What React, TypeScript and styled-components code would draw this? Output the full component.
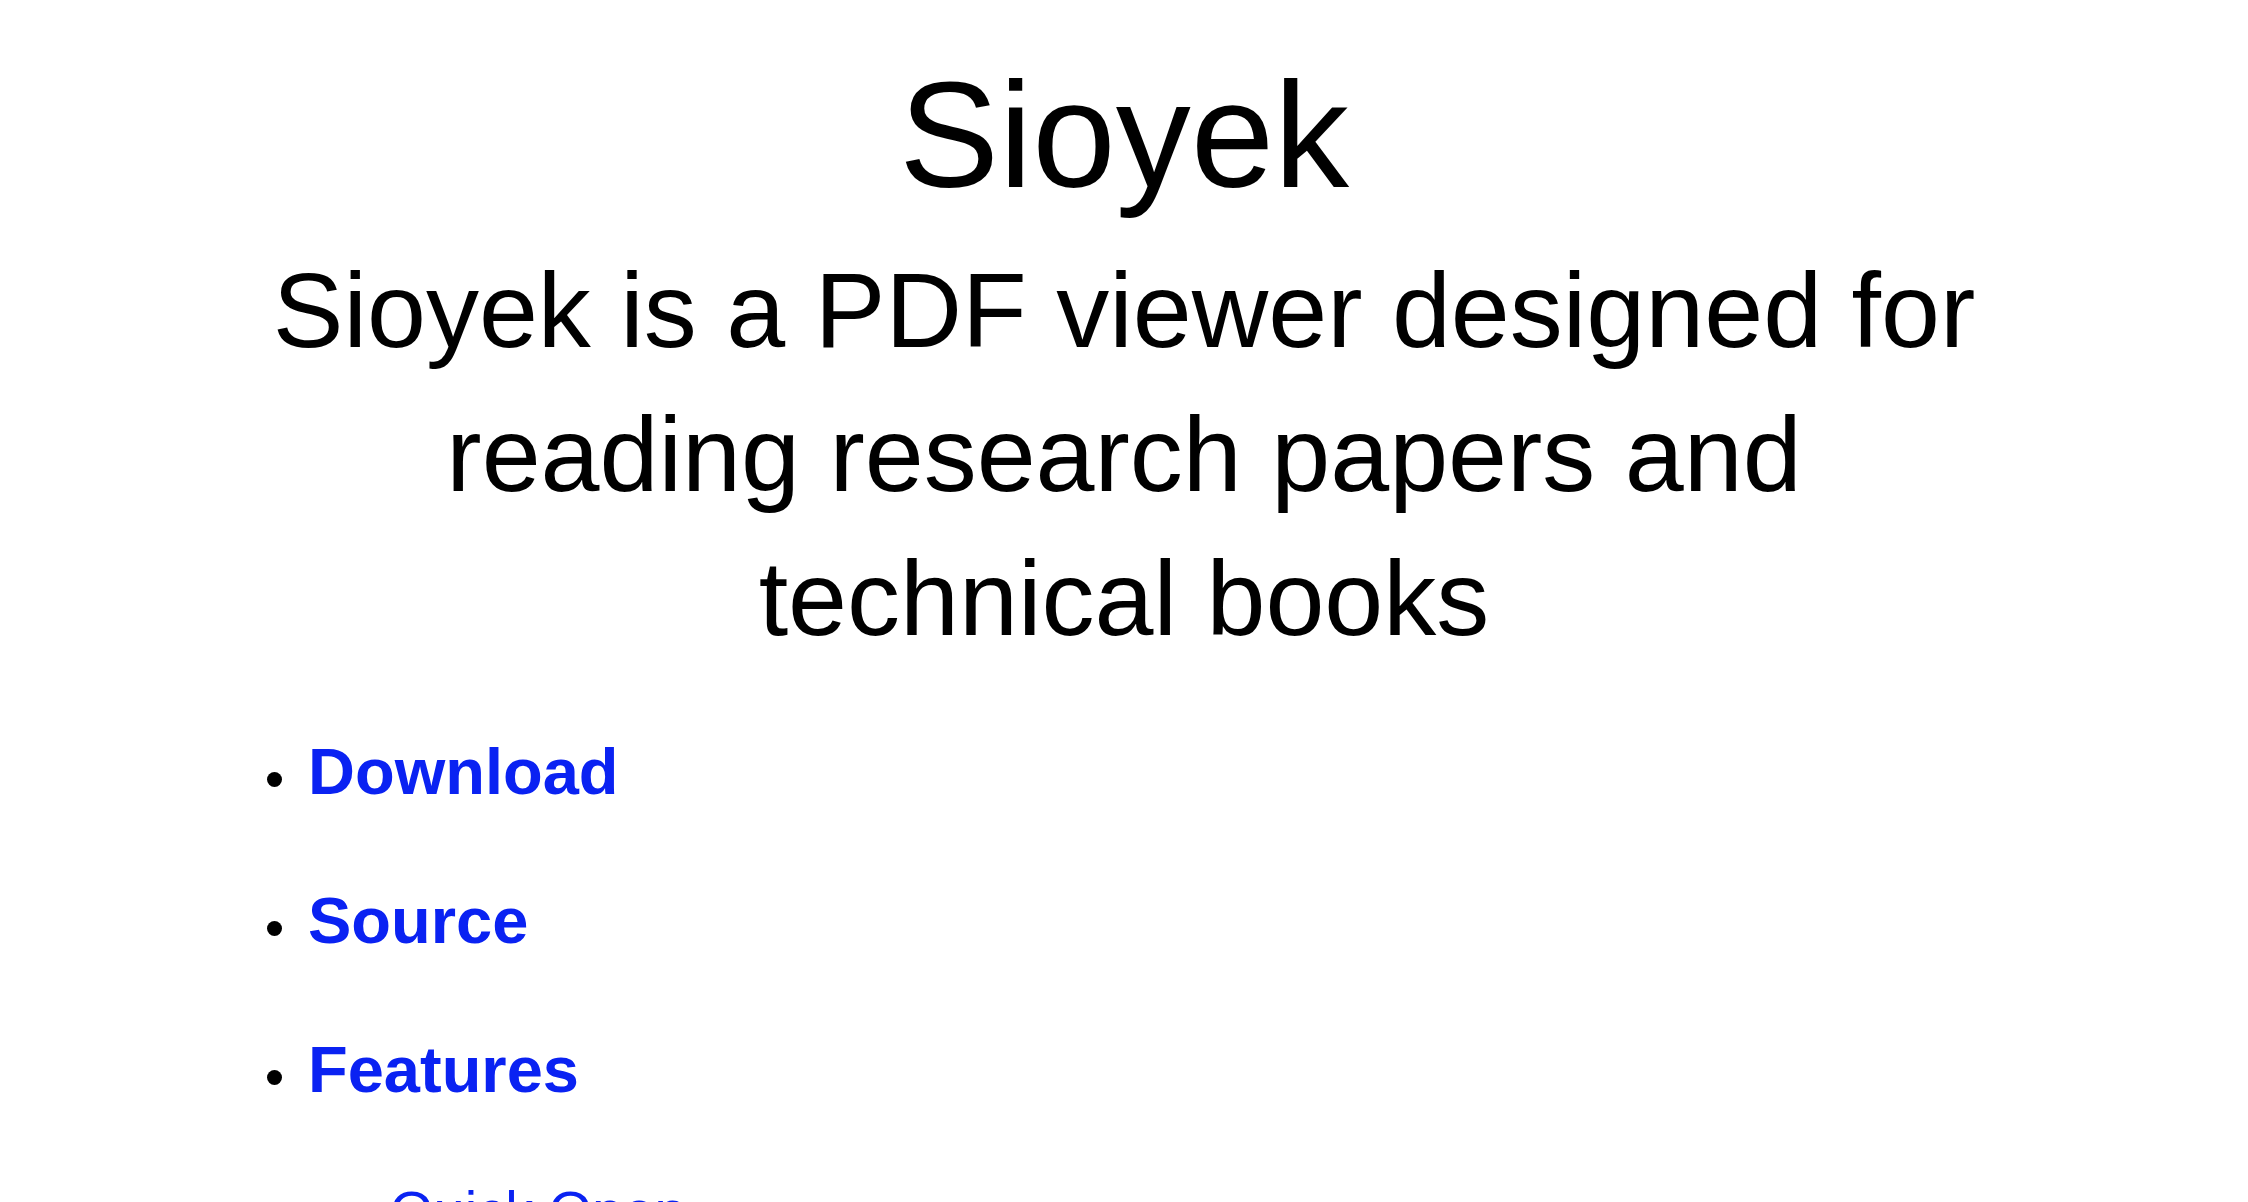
import React from "react";
import styled, { createGlobalStyle } from "styled-components";

const GlobalStyle = createGlobalStyle`
  html, body {
    margin: 0;
    padding: 0;
    background: #ffffff;
  }
  body {
    font-family: "Liberation Sans", Arial, Helvetica, sans-serif;
    color: #000000;
  }
`;

const Page = styled.main`
  padding-top: 60px;
`;

const Title = styled.h1`
  margin: 0;
  text-align: center;
  font-size: 150px;
  line-height: 150px;
  font-weight: normal;
`;

const Tagline = styled.h2`
  margin: 28px auto 0;
  max-width: 1750px;
  text-align: center;
  font-size: 106px;
  line-height: 144px;
  font-weight: normal;
`;

const NavList = styled.ul`
  list-style: none;
  margin: 62px 0 0;
  padding: 0 0 0 267px;
`;

const NavItem = styled.li`
  display: grid;
  grid-template-columns: 15px auto;
  column-gap: 26px;
  justify-content: start;
  font-size: 65px;
  line-height: 80px;
  margin-bottom: 69px;

  &::before {
    content: "";
    width: 15px;
    height: 15px;
    border-radius: 50%;
    background: #000000;
    margin-top: 40px;
  }
`;

const NavLink = styled.a<{ $bold?: boolean }>`
  color: #0a22f2;
  font-weight: ${(p) => (p.$bold ? "bold" : "normal")};
  text-decoration: none;
`;

const SubList = styled.ul`
  grid-column: 2;
  list-style: none;
  margin: 66px 0 0;
  padding: 0 0 0 44px;
`;

const SubItem = styled.li`
  display: grid;
  grid-template-columns: 13px auto;
  column-gap: 25px;
  justify-content: start;
  font-size: 56px;
  line-height: 70px;
  margin-bottom: 30px;

  &::before {
    content: "";
    box-sizing: border-box;
    width: 13px;
    height: 13px;
    border-radius: 50%;
    border: 2px solid #000000;
    margin-top: 38px;
  }
`;

const links = ["Download", "Source"];
const features = ["Quick Open", "Smart Jump", "Overview", "Portals"];

export default function App() {
  return (
    <>
      <GlobalStyle />
      <Page>
        <Title>Sioyek</Title>
        <Tagline>
          Sioyek is a PDF viewer designed for reading research papers and technical books
        </Tagline>
        <NavList>
          {links.map((l) => (
            <NavItem key={l}>
              <NavLink $bold href="#">
                {l}
              </NavLink>
            </NavItem>
          ))}
          <NavItem>
            <NavLink $bold href="#">
              Features
            </NavLink>
            <SubList>
              {features.map((f) => (
                <SubItem key={f}>
                  <NavLink href="#">{f}</NavLink>
                </SubItem>
              ))}
            </SubList>
          </NavItem>
        </NavList>
      </Page>
    </>
  );
}
